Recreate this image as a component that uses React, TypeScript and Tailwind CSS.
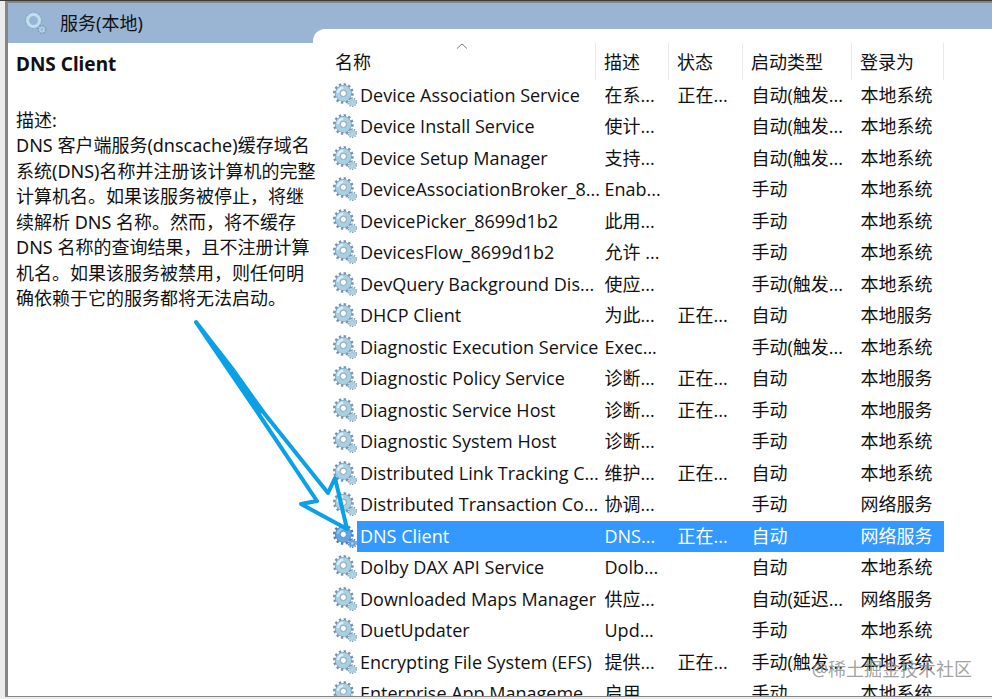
import { useState } from "react";

type Service = {
  name: string;
  desc: string;
  status?: string;
  startup: string;
  logon: string;
};

const services: Service[] = [
  { name: "Device Association Service", desc: "在系...", status: "正在...", startup: "自动(触发...", logon: "本地系统" },
  { name: "Device Install Service", desc: "使计...", startup: "自动(触发...", logon: "本地系统" },
  { name: "Device Setup Manager", desc: "支持...", startup: "自动(触发...", logon: "本地系统" },
  { name: "DeviceAssociationBroker_8...", desc: "Enab...", startup: "手动", logon: "本地系统" },
  { name: "DevicePicker_8699d1b2", desc: "此用...", startup: "手动", logon: "本地系统" },
  { name: "DevicesFlow_8699d1b2", desc: "允许 ...", startup: "手动", logon: "本地系统" },
  { name: "DevQuery Background Dis...", desc: "使应...", startup: "手动(触发...", logon: "本地系统" },
  { name: "DHCP Client", desc: "为此...", status: "正在...", startup: "自动", logon: "本地服务" },
  { name: "Diagnostic Execution Service", desc: "Exec...", startup: "手动(触发...", logon: "本地系统" },
  { name: "Diagnostic Policy Service", desc: "诊断...", status: "正在...", startup: "自动", logon: "本地服务" },
  { name: "Diagnostic Service Host", desc: "诊断...", status: "正在...", startup: "手动", logon: "本地服务" },
  { name: "Diagnostic System Host", desc: "诊断...", startup: "手动", logon: "本地系统" },
  { name: "Distributed Link Tracking C...", desc: "维护...", status: "正在...", startup: "自动", logon: "本地系统" },
  { name: "Distributed Transaction Co...", desc: "协调...", startup: "手动", logon: "网络服务" },
  { name: "DNS Client", desc: "DNS...", status: "正在...", startup: "自动", logon: "网络服务" },
  { name: "Dolby DAX API Service", desc: "Dolb...", startup: "自动", logon: "本地系统" },
  { name: "Downloaded Maps Manager", desc: "供应...", startup: "自动(延迟...", logon: "网络服务" },
  { name: "DuetUpdater", desc: "Upd...", startup: "手动", logon: "本地系统" },
  { name: "Encrypting File System (EFS)", desc: "提供...", status: "正在...", startup: "手动(触发...", logon: "本地系统" },
  { name: "Enterprise App Manageme", desc: "启用", startup: "手动", logon: "本地系统" },
];

const description = [
  "DNS 客户端服务(dnscache)缓存域名",
  "系统(DNS)名称并注册该计算机的完整",
  "计算机名。如果该服务被停止，将继",
  "续解析 DNS 名称。然而，将不缓存",
  "DNS 名称的查询结果，且不注册计算",
  "机名。如果该服务被禁用，则任何明",
  "确依赖于它的服务都将无法启动。",
];

function GearIcon({ selected }: { selected: boolean }) {
  const body = selected ? "#62a3e0" : "#a9cfe5";
  const edge = selected ? "#4a80ba" : "#7595ac";
  return (
    <svg viewBox="0 0 25 25" className="h-6 w-6 shrink-0" aria-hidden="true">
      <circle cx="10.8" cy="10.8" r="9.4" fill="none" stroke={edge} strokeWidth="2.8" strokeDasharray="2.4 2.522" />
      <circle cx="10.8" cy="10.8" r="6" fill="none" stroke={edge} strokeWidth="5.6" />
      <circle cx="10.8" cy="10.8" r="5.8" fill="none" stroke={body} strokeWidth="4.8" />
      <path d="M5 10.4a6 6 0 0 1 5.6-5.4" fill="none" stroke={selected ? "#93c4f2" : "#dceff8"} strokeWidth="2.6" />
      <circle cx="10.8" cy="10.8" r="3.2" fill="#fff" stroke={edge} strokeWidth="0.8" />
      <circle cx="20" cy="20" r="4.2" fill="none" stroke={edge} strokeWidth="1.8" strokeDasharray="1.3 1.339" />
      <circle cx="20" cy="20" r="2.5" fill="none" stroke={body} strokeWidth="2.4" />
      <circle cx="20" cy="20" r="1.1" fill="#e8f2f8" stroke={edge} strokeWidth="0.5" />
    </svg>
  );
}

function HeaderIcon() {
  return (
    <svg viewBox="0 0 24 24" className="h-6 w-6 shrink-0" aria-hidden="true">
      <circle cx="9.5" cy="9.5" r="8" fill="none" stroke="#8aa5bf" strokeWidth="1.6" strokeDasharray="1.8 2.389" />
      <circle cx="9.5" cy="9.5" r="6" fill="none" stroke="#bfe0ee" strokeWidth="3" />
      <circle cx="18" cy="18.5" r="3.8" fill="none" stroke="#7f9ab2" strokeWidth="1.8" strokeDasharray="1.4 1.585" />
      <circle cx="18" cy="18.5" r="2.2" fill="none" stroke="#b4d3e4" strokeWidth="1.6" />
    </svg>
  );
}

function DetailPane({ service }: { service: string }) {
  return (
    <aside className="z-10 flex w-[305px] shrink-0 flex-col">
      <header className="flex h-10 shrink-0 items-center gap-3 bg-[#9ab4d4] pl-4">
        <HeaderIcon />
        <span>服务(本地)</span>
      </header>
      <div className="pl-2 pt-2">
        <h1 className="text-[19px] leading-[26px] font-bold">{service}</h1>
        <div className="pt-[30px] whitespace-nowrap">
          <p className="leading-[26px]">描述:</p>
          {description.map((line) => (
            <p key={line} className="odd:leading-[26px] even:leading-[25px]">
              {line}
            </p>
          ))}
        </div>
      </div>
    </aside>
  );
}

const headCell = "border-r border-[#e9e9e9] p-0 pt-[2px] pl-2 text-left font-normal";

export default function App() {
  const [selected, setSelected] = useState("DNS Client");

  return (
    <div className="relative flex h-screen flex-col overflow-hidden border-t border-[#3c3c3c] bg-[#ececec] pb-[2px] pl-[5px] font-['Noto_Sans','Noto_Sans_CJK_SC',sans-serif] text-[18px] text-[#111]">
      <main className="flex min-h-0 flex-1 overflow-hidden border-t-2 border-b border-l-[3px] border-[#858585] bg-white">
        <DetailPane service="DNS Client" />

        <section className="flex min-w-0 flex-1 flex-col bg-[#9ab4d4] pt-[26px]">
          <div className="min-h-0 flex-1 overflow-hidden rounded-tl-[12px] bg-white pt-[14px] pr-12">
            <table className="w-full table-fixed border-collapse font-['Open_Sans','Noto_Sans_CJK_SC',sans-serif]">
              <colgroup>
                <col />
                <col className="w-[73px]" />
                <col className="w-[74px]" />
                <col className="w-[109px]" />
                <col className="w-[92px]" />
              </colgroup>
              <thead>
                <tr className="h-[37px]">
                  <th className={`${headCell} relative`}>
                    <span className="pl-[14px]">名称</span>
                    <svg viewBox="0 0 12 6" className="absolute top-0 left-[143px] h-[6px] w-3" aria-hidden="true">
                      <path d="M1 5.5 6 1l5 4.5" fill="none" stroke="#777" />
                    </svg>
                  </th>
                  <th className={`${headCell}`}>描述</th>
                  <th className={headCell}>状态</th>
                  <th className={headCell}>启动类型</th>
                  <th className={headCell}>登录为</th>
                </tr>
              </thead>
              <tbody>
                {services.map((s) => {
                  const active = s.name === selected;
                  const cell = active ? "bg-[#3399ff] p-0 pl-[9px] align-top text-white" : "p-0 pl-[9px] align-top";
                  return (
                    <tr
                      key={s.name}
                      onClick={() => setSelected(s.name)}
                      className="cursor-default leading-[30px] whitespace-nowrap odd:h-[31px] even:h-[32px]"
                    >
                      <td className="h-[inherit] p-0 pl-5 align-top">
                        <div className="flex h-[inherit] items-start">
                          <div className="flex h-[30px] items-center">
                            <GearIcon selected={active} />
                          </div>
                          <span className={active ? "h-[inherit] flex-1 bg-[#3399ff] pl-[3px] text-white" : "flex-1 pl-[3px]"}>
                            {s.name}
                          </span>
                        </div>
                      </td>
                      <td className={cell}>{s.desc}</td>
                      <td className={cell}>{s.status}</td>
                      <td className={cell}>{s.startup}</td>
                      <td className={cell}>{s.logon}</td>
                    </tr>
                  );
                })}
              </tbody>
            </table>
          </div>
        </section>
      </main>

      {/* pointer from the description to the selected service */}
      <svg
        viewBox="0 0 160 220"
        className="pointer-events-none absolute top-[314px] left-[190px] z-20 h-[220px] w-[160px]"
        aria-hidden="true"
      >
        <g stroke="#0aa1e6" strokeLinejoin="round">
          <path d="M6 7 38 54 70 101 127 186 111 189 157 214 145 163 138 178 74 98 41 52Z" fill="none" strokeWidth="4" />
          <path d="M6 7 38 54 69 98 73 97 41 52Z" fill="#0aa1e6" strokeWidth="2" />
        </g>
      </svg>

      <span className="pointer-events-none absolute right-5 bottom-[18px] leading-6 text-[#888]/80">@稀土掘金技术社区</span>
    </div>
  );
}
